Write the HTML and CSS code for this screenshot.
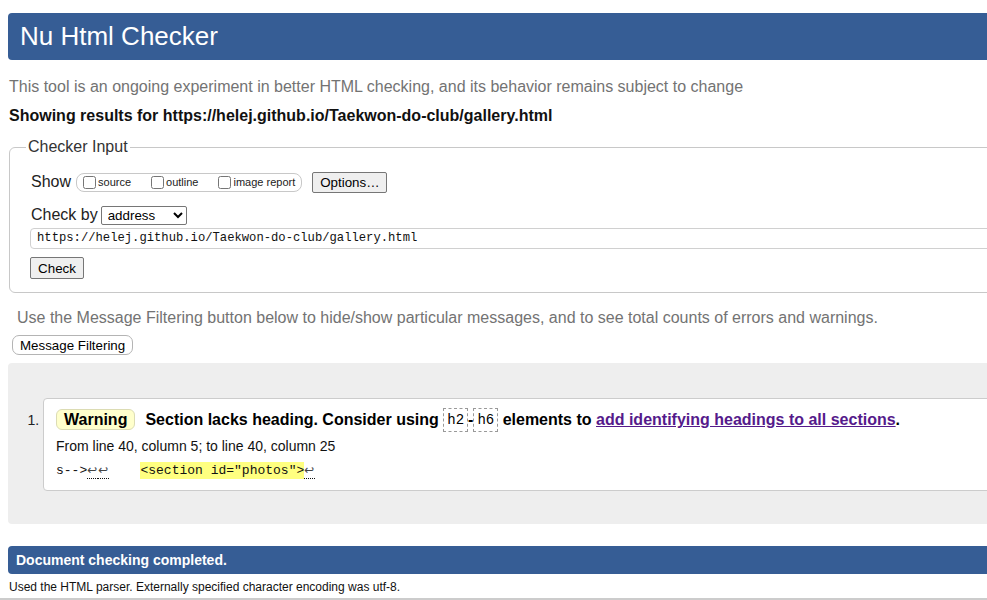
FILE: index.html
```html
<!DOCTYPE html>
<html lang="en">
<head>
<meta charset="utf-8">
<title>Showing results for https://helej.github.io/Taekwon-do-club/gallery.html - Nu Html Checker</title>
<link rel="stylesheet" href="styles.css">
</head>
<body>
<h1 class="title">Nu Html Checker</h1>
<p class="intro">This tool is an ongoing experiment in better HTML checking, and its behavior remains subject to change</p>
<p class="showing">Showing results for https://helej.github.io/Taekwon-do-club/gallery.html</p>

<fieldset class="checker">
  <legend class="legend">Checker Input</legend>
  <div class="row show-row">
    <span class="row-label">Show</span>
    <span class="opts">
      <label class="opt"><input type="checkbox" class="cb">source</label>
      <label class="opt"><input type="checkbox" class="cb">outline</label>
      <label class="opt"><input type="checkbox" class="cb">image report</label>
    </span>
    <button class="btn btn-options" type="button">Options…</button>
  </div>
  <div class="row by-row">
    <span class="row-label">Check by</span>
    <select class="sel"><option>address</option></select>
  </div>
  <div class="url">https://helej.github.io/Taekwon-do-club/gallery.html</div>
  <div class="row check-row">
    <button class="btn btn-check" type="button">Check</button>
  </div>
</fieldset>

<p class="filter-note">Use the Message Filtering button below to hide/show particular messages, and to see total counts of errors and warnings.</p>
<button class="btn-filter" type="button">Message Filtering</button>

<div class="results">
  <ol class="msgs">
    <li class="msg">
      <p class="msg-head"><strong class="badge">Warning</strong><span class="msg-text">Section lacks heading. Consider using <code class="tag">h2</code>-<code class="tag">h6</code> elements to <a class="msg-link" href="#">add identifying headings to all sections</a>.</span></p>
      <p class="loc">From line 40, column 5; to line 40, column 25</p>
      <p class="extract">s--&gt;<b class="lf">↩</b><b class="lf">↩</b>    <mark class="hl">&lt;section id="photos"&gt;</mark><b class="lf">↩</b></p>
    </li>
  </ol>
</div>

<h2 class="done">Document checking completed.</h2>
<p class="details">Used the HTML parser. Externally specified character encoding was utf-8.</p>
<div class="rule"></div>
</body>
</html>
```

FILE: styles.css
```css
html {
  overflow: hidden;
}
body {
  margin: 0;
  font-family: "Liberation Sans", Arial, sans-serif;
  color: #111;
  width: 1200px;
}
.title {
  margin: 13px 0 0 8px;
  height: 47px;
  line-height: 47px;
  padding-left: 12px;
  background: #365d95;
  color: #fff;
  font-size: 26px;
  font-weight: normal;
  border-radius: 4px;
}
.intro {
  margin: 17px 0 0 9px;
  font-size: 16px;
  line-height: 20px;
  color: #737373;
}
.showing {
  margin: 9px 0 0 9px;
  font-size: 16px;
  line-height: 20px;
  font-weight: bold;
}
.checker {
  margin: 11px 0 0 9px;
  padding: 0 20px 13px 20px;
  border: 1px solid #c8c8c8;
  border-radius: 6px;
  min-width: 0;
}
.legend {
  padding: 0 2px;
  margin-left: -4px;
  font-size: 16px;
  line-height: 20px;
  color: #333;
}
.row {
  display: flex;
  align-items: center;
}
.row-label {
  font-size: 16px;
  color: #222;
  line-height: 20px;
}
.show-row {
  margin-top: 14px;
  height: 22px;
  padding-left: 1px;
}
.opts {
  display: flex;
  align-items: center;
  margin-left: 5px;
  height: 17px;
  padding: 0 6px 0 2px;
  border: 1px solid #c8c8c8;
  border-radius: 8px;
}
.opt {
  display: flex;
  align-items: center;
  font-size: 11px;
  color: #222;
  margin-right: 16px;
}
.opt:last-child {
  margin-right: 0;
}
.cb {
  width: 13px;
  height: 13px;
  margin: 0 2px 0 4px;
}
.btn {
  font-family: "Liberation Sans", Arial, sans-serif;
  font-size: 13.33px;
  background: #efefef;
  border: 1px solid #767676;
  border-radius: 2px;
  color: #000;
  padding: 0 7px;
}
.btn-options {
  margin-left: 10px;
  height: 21px;
  width: 75px;
}
.by-row {
  margin-top: 11px;
  height: 22px;
  padding-left: 1px;
}
.sel {
  margin-left: 3px;
  width: 86px;
  height: 19px;
  font-family: "Liberation Sans", Arial, sans-serif;
  font-size: 13.33px;
  border: 1px solid #767676;
  border-radius: 2px;
  background: #fff;
  color: #000;
  padding: 0 0 0 2px;
}
.url {
  margin-top: 2px;
  height: 19px;
  line-height: 19px;
  border: 1px solid #d0d0d0;
  border-radius: 4px;
  padding-left: 6px;
  font-family: "Liberation Mono", "DejaVu Sans Mono", monospace;
  font-size: 12.2px;
  color: #111;
  margin-right: -60px;
}
.check-row {
  margin-top: 8px;
}
.btn-check {
  height: 22px;
  width: 54px;
}
.filter-note {
  margin: 15px 0 0 17px;
  font-size: 16px;
  line-height: 20px;
  color: #737373;
}
.btn-filter {
  display: block;
  margin: 7px 0 0 12px;
  height: 20px;
  padding: 0 7px;
  font-family: "Liberation Sans", Arial, sans-serif;
  font-size: 13.33px;
  color: #000;
  background: #fff;
  border: 1px solid #b4b4b4;
  border-radius: 7px;
}
.results {
  margin: 8px 0 0 8px;
  padding: 35px 0 33px 35px;
  background: #eeeeee;
  border-radius: 4px;
}
.msgs {
  margin: 0;
  padding: 0;
  list-style: decimal outside;
  font-size: 14px;
}
.msg {
  background: #fff;
  border: 1px solid #cccccc;
  border-radius: 4px;
  padding: 9px 12px 9px 12px;
  color: #111;
}
.msg::marker {
  color: #222;
}
.msg-head {
  margin: 0;
  line-height: 24px;
  font-size: 16px;
  font-weight: bold;
  color: #000;
}
.badge {
  display: inline-block;
  vertical-align: top;
  margin-top: 1px;
  height: 19px;
  line-height: 19px;
  padding: 0 7px;
  background: #ffffcc;
  border: 1px solid #dcdcb4;
  border-radius: 6px;
  font-size: 16px;
}
.msg-text {
  margin-left: 10px;
}
.tag {
  display: inline-block;
  vertical-align: top;
  height: 22px;
  line-height: 22px;
  padding: 0 3px;
  border: 1px dashed #999;
  font-family: "Liberation Mono", "DejaVu Sans Mono", monospace;
  font-size: 14px;
  font-weight: normal;
}
.msg-link {
  color: #551a8b;
  text-decoration: underline;
}
.loc {
  margin: 4px 0 0 0;
  line-height: 20px;
  font-size: 14px;
}
.extract {
  margin: 5px 0 0 0;
  line-height: 20px;
  font-family: "Liberation Mono", "DejaVu Sans Mono", monospace;
  font-size: 13px;
  white-space: pre;
  color: #111;
}
.lf {
  display: inline-block;
  width: 11px;
  line-height: 16px;
  font-family: "DejaVu Sans", sans-serif;
  font-size: 12px;
  font-weight: normal;
  border-bottom: 1px dotted #111;
  color: #444;
}
.hl {
  background: #ffff80;
  color: #111;
  padding: 1px 0;
}
.done {
  margin: 22px 0 0 8px;
  height: 28px;
  line-height: 28px;
  padding-left: 8px;
  background: #365d95;
  color: #fff;
  font-size: 14px;
  font-weight: bold;
  border-radius: 4px;
}
.details {
  margin: 5px 0 0 9px;
  font-size: 12px;
  line-height: 16px;
  color: #111;
}
.rule {
  margin-top: 3px;
  border-top: 2px solid #cccccc;
}
```
